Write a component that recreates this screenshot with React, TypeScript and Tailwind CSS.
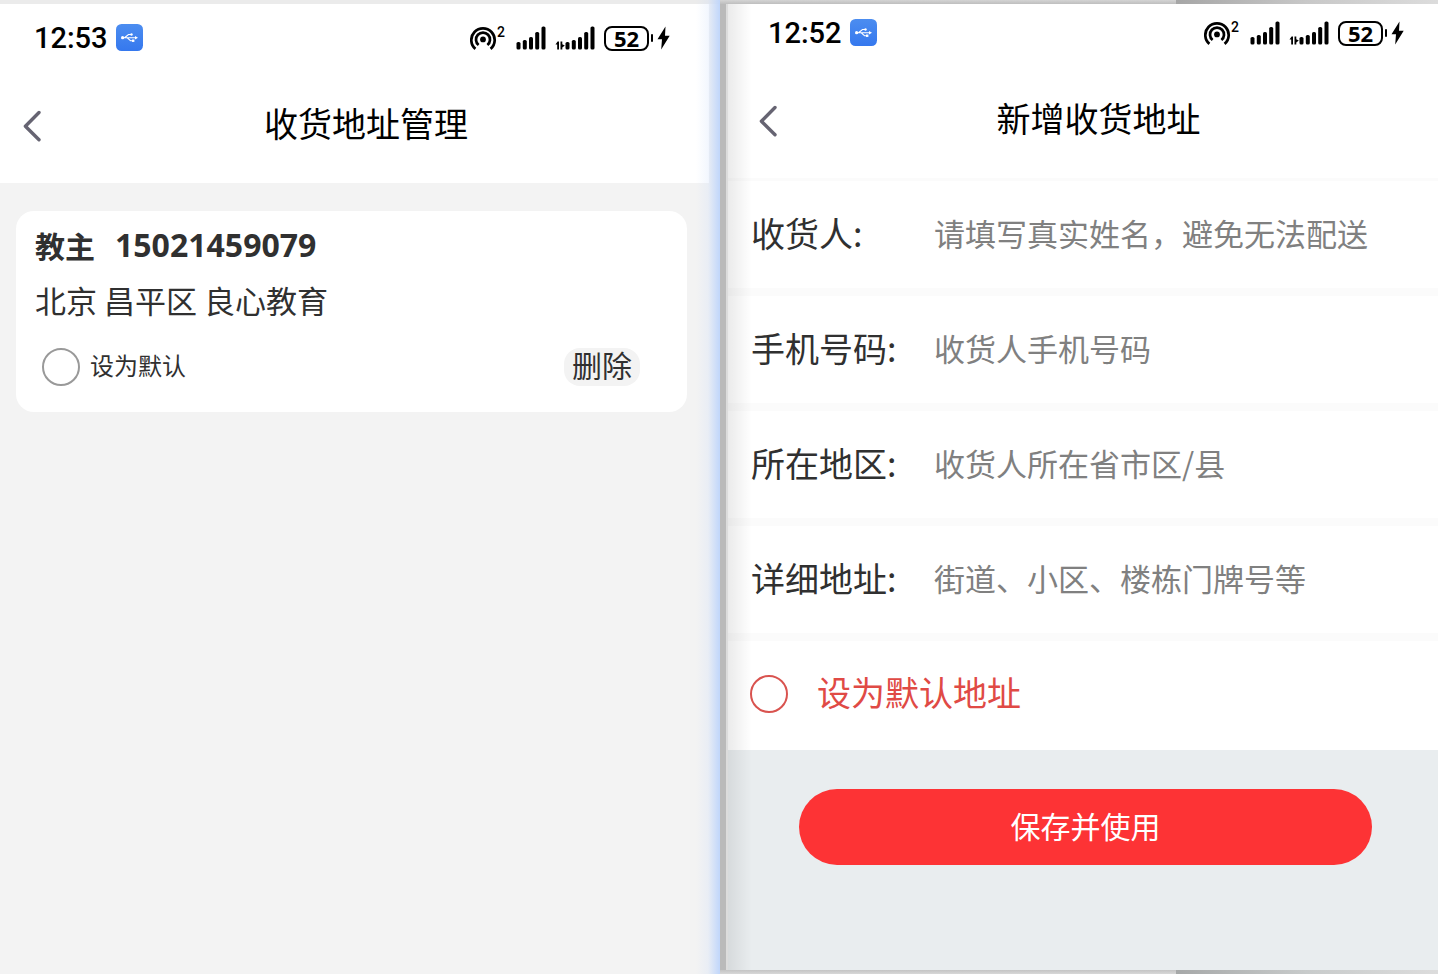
import { ReactNode } from "react";

interface StatusBarProps {
  time: string;
}

interface NavBarProps {
  title: string;
  className: string;
}

interface FieldProps {
  id: string;
  label: string;
  placeholder: string;
}

const fields: FieldProps[] = [
  { id: "name", label: "收货人:", placeholder: "请填写真实姓名，避免无法配送" },
  { id: "phone", label: "手机号码:", placeholder: "收货人手机号码" },
  { id: "region", label: "所在地区:", placeholder: "收货人所在省市区/县" },
  { id: "detail", label: "详细地址:", placeholder: "街道、小区、楼栋门牌号等" },
];

const UsbBadge = () => (
  <svg viewBox="0 0 27 27" className="ml-2 h-[27px] w-[27px]" aria-hidden="true">
    <defs>
      <linearGradient id="usb" x1="0" y1="0" x2="0" y2="1">
        <stop offset="0" stopColor="#4c8df0" />
        <stop offset="1" stopColor="#3578ee" />
      </linearGradient>
    </defs>
    <rect width="27" height="27" rx="5.5" fill="url(#usb)" />
    <g fill="none" stroke="#fff" strokeWidth="1.1">
      <path d="M6 13.7H20M8.5 13.7L12.5 10.5H15M11 13.7L14.5 16.7H17" />
    </g>
    <circle cx="6.6" cy="13.7" r="1.6" fill="#fff" />
    <circle cx="15.5" cy="10.5" r="1.2" fill="#fff" />
    <rect x="16" y="15.5" width="2.4" height="2.4" fill="#fff" />
    <path d="M19 12L22 13.7L19 15.4Z" fill="#fff" />
  </svg>
);

const HotspotIcon = () => (
  <svg viewBox="0 0 27 25" className="h-[25px] w-[27px]" aria-hidden="true">
    <g fill="none" stroke="#000" strokeWidth="2.7">
      <path d="M5.4 22.9A11.7 11.7 0 1 1 20.6 22.9" />
      <path d="M8.6 19A7 7 0 1 1 17.4 19" />
    </g>
    <circle cx="13" cy="13.4" r="2.9" />
  </svg>
);

const SignalBars = () => (
  <svg viewBox="0 0 30 24" className="h-6 w-[30px]" aria-hidden="true">
    <rect x="0.5" y="16" width="4" height="7.5" rx="1.6" />
    <rect x="6.8" y="14" width="4" height="9.5" rx="1.6" />
    <rect x="13" y="11" width="4" height="12.5" rx="1.6" />
    <rect x="19.2" y="6" width="4" height="17.5" rx="1.6" />
    <rect x="25.5" y="0.5" width="4" height="23" rx="1.6" />
  </svg>
);

const DataArrows = () => (
  <svg viewBox="0 0 10 24" className="ml-[9px] h-6 w-[10px]" aria-hidden="true">
    <path d="M0.5 18.5L2.6 15.5H4V23.5H2.2V18.5ZM5.5 15.5H7.3V18.2L9.8 19.5L7.3 21.5V23.5H5.5Z" />
  </svg>
);

const StatusBar = ({ time }: StatusBarProps) => (
  <div className="flex h-14 items-center text-black">
    <span className="pt-0.5 font-[Roboto,sans-serif] text-[29px] leading-none font-medium">
      {time}
    </span>
    <UsbBadge />
    <div className="ml-auto flex items-center pt-0.5">
      <HotspotIcon />
      <span className="mb-3 w-[7px] font-['Liberation_Sans_Narrow',Roboto,sans-serif] text-[14px] leading-none font-medium">
        2
      </span>
      <div className="ml-3 flex">
        <SignalBars />
        <DataArrows />
        <SignalBars />
      </div>
      <span className="ml-[9px] flex h-[25px] w-[45px] items-center justify-center rounded-lg border-2 border-black font-['Noto_Sans',sans-serif] text-[22px] leading-none font-bold">
        52
      </span>
      <span className="ml-0.5 h-2 w-0.5 rounded-full bg-black" />
      <svg viewBox="0 0 13 24" className="ml-1 h-6 w-[13px]" aria-hidden="true">
        <path d="M8.5 0.5L0.5 13.2H5L4.2 23.5L12.7 9.8H8Z" />
      </svg>
    </div>
  </div>
);

const NavBar = ({ title, className }: NavBarProps) => (
  <div className={`grid h-[118px] items-center ${className}`}>
    <button type="button" aria-label="返回" className="col-start-1 row-start-1 w-10 pt-1">
      <svg viewBox="0 0 18 32" className="h-8 w-[18px]" aria-hidden="true">
        <path
          d="M16 2.5L2.4 16.2L16 29.8"
          fill="none"
          stroke="#666472"
          strokeWidth="3.4"
          strokeLinecap="round"
          strokeLinejoin="round"
        />
      </svg>
    </button>
    <h1 className="col-start-1 row-start-1 justify-self-center pb-0.5 text-[34px] leading-[44px] text-black">
      {title}
    </h1>
  </div>
);

const Field = ({ id, label, placeholder }: FieldProps) => (
  <div className="mb-2 flex h-[107px] items-center bg-white pb-1 pl-[23px]">
    <label htmlFor={id} className="w-[183px] shrink-0 text-[34px] leading-[44px]">
      {label}
    </label>
    <input
      id={id}
      type="text"
      placeholder={placeholder}
      className="h-14 min-w-0 flex-1 text-[31px] outline-none placeholder:text-[#808080]"
    />
  </div>
);

const AddressCard = () => (
  <section className="mt-7 mr-[33px] ml-4 rounded-[18px] bg-white pt-3 pr-[47px] pb-[26px] pl-[19px]">
    <h2 className="flex items-center gap-5 leading-[44px] font-bold">
      <span className="text-[30px]">教主</span>
      <span className="font-['Noto_Sans',sans-serif] text-[32px]">15021459079</span>
    </h2>
    <p className="mt-[11px] text-[31px] leading-[44px]">北京 昌平区 良心教育</p>
    <div className="mt-[26px] flex items-center justify-between">
      <label className="flex items-center gap-2.5 pl-[7px] text-[24px] leading-[34px]">
        <input
          type="radio"
          className="h-[38px] w-[38px] appearance-none rounded-full border-2 border-[#999]"
        />
        <span className="pb-1">设为默认</span>
      </label>
      <button
        type="button"
        className="h-[38px] w-[76px] rounded-2xl bg-[#f3f3f3] pb-1.5 text-[30px] leading-8"
      >
        删除
      </button>
    </div>
  </section>
);

const ManagePage = () => (
  <main className="relative flex flex-col bg-[#f3f3f3]">
    <div className="h-1 bg-[#ebebeb]" />
    <header className="mr-[11px] bg-white pt-[5px]">
      <div className="pr-[39px] pl-[34px]">
        <StatusBar time="12:53" />
      </div>
      <NavBar title="收货地址管理" className="pl-[23px]" />
    </header>
    <AddressCard />
    <div className="pointer-events-none absolute inset-y-0 right-0 w-6 bg-linear-to-r from-[#c3d8fb]/0 via-[#c3d8fb]/20 to-[#c0d6fb]" />
  </main>
);

const PageFrame = ({ children }: { children: ReactNode }) => (
  <div className="flex flex-col bg-[#bababa]">
    <div className="flex h-1">
      <div className="flex-[456] bg-linear-to-b from-[#d4d4d4] to-[#bebebe]" />
      <div className="flex-[262] bg-linear-to-r from-[#a6a6a6] via-[#c8c8c8] to-[#dcdcdc]" />
    </div>
    <div className="ml-1.5 flex flex-1 flex-col border-l-2 border-[#dcdcdc]">
      {children}
    </div>
    <div className="flex h-1">
      <div className="flex-[456] bg-linear-to-b from-[#c4c4c4] to-[#d8d8d8]" />
      <div className="flex-[262] bg-linear-to-r from-[#a6a8a8] via-[#c8cbcb] to-[#dcdcdc]" />
    </div>
  </div>
);

const AddPage = () => (
  <PageFrame>
    <main className="relative flex flex-1 flex-col bg-[#e9edef]">
      <form className="bg-[#fbfbfb]">
        <header className="mb-[3px] bg-white">
          <div className="pr-[34px] pl-10">
            <StatusBar time="12:52" />
          </div>
          <NavBar title="新增收货地址" className="pl-[31px]" />
        </header>
        {fields.map((field) => (
          <Field key={field.id} {...field} />
        ))}
        <label className="flex h-[109px] items-center gap-[29px] bg-white pb-1 pl-[22px] text-[34px] leading-[44px] text-[#e04a45]">
          <input
            type="radio"
            className="h-[38px] w-[38px] appearance-none rounded-full border-2 border-[#d9534f]"
          />
          <span className="pb-1">设为默认地址</span>
        </label>
        <div className="bg-[#e9edef] pt-[39px] pr-[66px] pb-10 pl-[71px]">
          <button
            type="submit"
            className="h-[76px] w-full rounded-full bg-[#fd3335] pb-1 text-[30px] text-white"
          >
            保存并使用
          </button>
        </div>
      </form>
      <div className="pointer-events-none absolute inset-y-0 left-0 w-6 bg-linear-to-r from-black/8 to-black/0" />
    </main>
  </PageFrame>
);

const App = () => {
  return (
    <div className="grid min-h-screen grid-cols-[720fr_718fr] font-['Noto_Sans_CJK_SC',sans-serif] text-[#303030]">
      <ManagePage />
      <AddPage />
    </div>
  );
};

export default App;
